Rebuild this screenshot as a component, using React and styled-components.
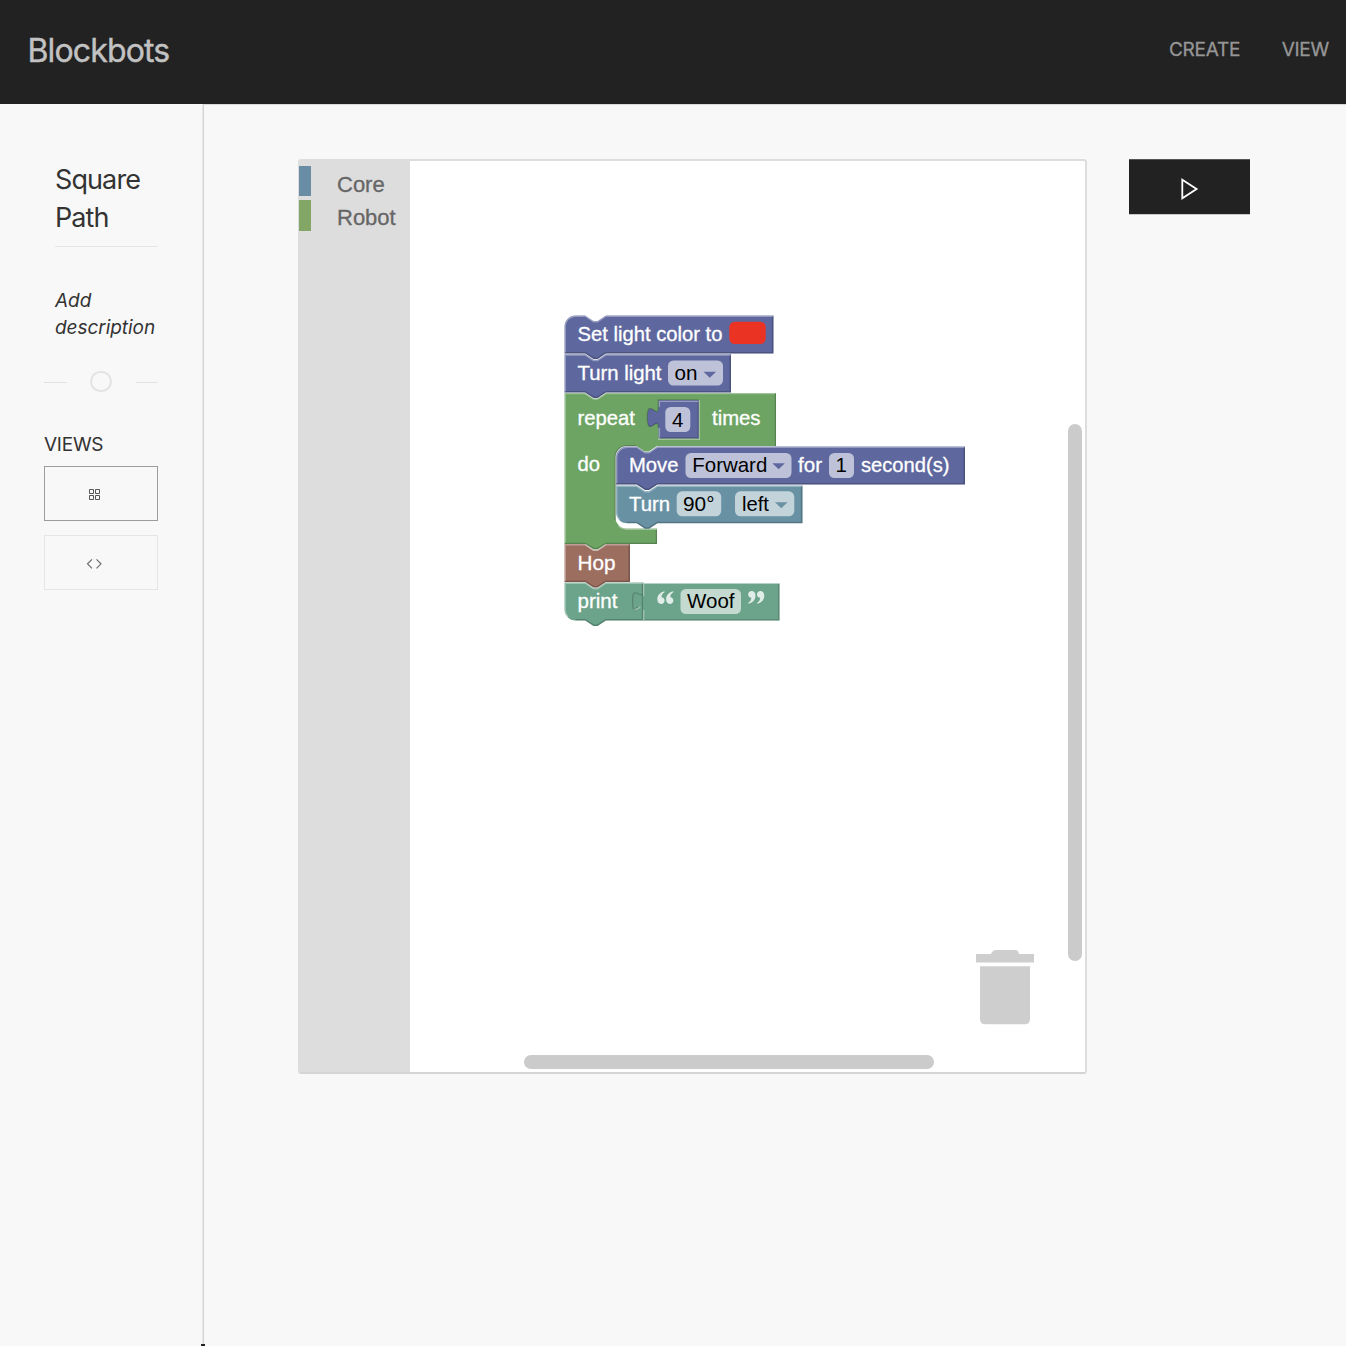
import React from "react";
import styled, { createGlobalStyle } from "styled-components";

const GlobalStyle = createGlobalStyle`
  *, *::before, *::after { box-sizing: border-box; }
  html, body { margin: 0; padding: 0; background: #f8f8f8; }
  body { font-family: Inter, "Liberation Sans", sans-serif; color: #333; overflow: hidden; }
`;

const Page = styled.div`
  display: flex;
  flex-direction: column;
  height: 1346px;
`;

const Header = styled.header`
  display: flex;
  flex: 0 0 104px;
  align-items: center;
  justify-content: space-between;
  padding: 0 17px 2px 27.5px;
  background: #222;
`;

const Brand = styled.a`
  font-size: 32px;
  line-height: 40px;
  letter-spacing: -0.85px;
  color: #c2c2c2;
  -webkit-text-stroke: 0.4px #c2c2c2;
`;

const Nav = styled.nav`
  display: flex;
  gap: 41.5px;
  padding-bottom: 2px;
`;

const NavLink = styled.a`
  font-size: 19px;
  line-height: 24px;
  letter-spacing: -0.25px;
  color: #969696;
  -webkit-text-stroke: 0.3px #969696;
`;

const Body = styled.div`
  display: flex;
  flex: 1;
  min-height: 0;
`;

const Sidebar = styled.aside`
  position: relative;
  flex: 0 0 204px;
  padding: 57px 45px 0 44px;
`;

const SidebarRule = styled.span`
  position: absolute;
  top: 0;
  bottom: 0;
  right: 0;
  width: 2px;
  background: linear-gradient(to right, #e9e9e9 50%, #d3d3d3 50%);
`;

const SidebarEnd = styled.span`
  position: absolute;
  right: -1px;
  bottom: 0;
  width: 4px;
  height: 2px;
  background: #222;
`;

const Title = styled.h1`
  margin: 0 0 0 11px;
  padding-bottom: 9px;
  width: 103px;
  border-bottom: 1px solid #e5e5e5;
  font-size: 27px;
  font-weight: 400;
  line-height: 38px;
  letter-spacing: -0.9px;
`;

const Description = styled.p`
  margin: 40px 0 0 11px;
  font-size: 19px;
  font-style: italic;
  line-height: 27px;
  letter-spacing: -0.05px;
`;

const Divider = styled.div`
  display: flex;
  align-items: center;
  justify-content: space-between;
  width: 114px;
  height: 22px;
  margin-top: 30px;
`;

const Dash = styled.span`
  width: 22.5px;
  height: 1px;
  background: #e2e2e2;
`;

const Ring = styled.span`
  width: 21.5px;
  height: 21.5px;
  margin-top: -1px;
  border: 2px solid #e3e3e3;
  border-radius: 50%;
`;

const SectionLabel = styled.h2`
  margin: 38px 0 8px;
  font-size: 19px;
  font-weight: 400;
  line-height: 27px;
  letter-spacing: -0.25px;
`;

const ViewButton = styled.button`
  display: flex;
  align-items: center;
  justify-content: center;
  width: 114px;
  height: 55px;
  margin: 0 0 14px;
  padding: 2px 14px 0 0;
  background: transparent;
  border: 1px solid ${(p) => (p.$active ? "#9c9c9c" : "#e5e5e5")};
`;

const Main = styled.main`
  display: flex;
  flex: 1;
  align-items: flex-start;
  gap: 42px;
  padding: 54px 0 0 94px;
  border-top: 1px solid #dadada;
`;

const Workspace = styled.section`
  position: relative;
  display: flex;
  width: 789px;
  height: 915px;
  border: 2px solid #ddd;
  border-bottom-color: #d4d4d4;
  border-radius: 3px;
  background: #fff;
`;

const Toolbox = styled.div`
  display: flex;
  flex: 0 0 110px;
  flex-direction: column;
  gap: 4px;
  padding-top: 5px;
  background: #ddd;
`;

const Category = styled.div`
  height: 30.4px;
  margin-left: -1px;
  padding: 2.6px 0 0 26px;
  border-left: 12px solid ${(p) => p.$color};
  font: 22px/32px "Liberation Sans", Arial, sans-serif;
  color: #666;
  -webkit-text-stroke: 0.3px #666;
  white-space: nowrap;

  & + & {
    padding-top: 1.6px;
  }
`;

const Canvas = styled.svg`
  display: block;
  width: 675px;
  height: 911px;
`;

const Label = styled.text`
  font: 20.2px "Liberation Sans", Arial, sans-serif;
  fill: ${(p) => (p.$dark ? "#000" : "#fff")};
  stroke: ${(p) => (p.$dark ? "none" : "#fff")};
  stroke-width: 0.3;
`;

const FieldBox = styled.rect`
  fill: #fff;
  fill-opacity: 0.6;
`;

const Highlight = styled.path`
  fill: none;
  stroke: #fff;
  stroke-opacity: 0.34;
  stroke-width: 1.4;
`;

const Shade = styled.path`
  fill: none;
  stroke: #000;
  stroke-opacity: 0.2;
  stroke-width: ${(p) => p.$width || 1.3};
`;

const Scrollbar = styled.div`
  position: absolute;
  left: ${(p) => p.$x}px;
  top: ${(p) => p.$y}px;
  width: ${(p) => p.$w}px;
  height: ${(p) => p.$h}px;
  border-radius: 7px;
  background: #cbcbcb;
`;

const TrashCan = styled.svg`
  position: absolute;
  left: 676px;
  top: 788px;
  width: 62px;
  height: 78px;
  fill: #cecece;
`;

const RunButton = styled.button`
  display: flex;
  align-items: center;
  justify-content: center;
  width: 121px;
  height: 55px;
  padding: 4px 0 0 1px;
  border: 0;
  background: #222;
  box-shadow: inset 0 1px #555, 0 0.5px #999;
`;

const NAVY = "#5e689f";
const GREEN = "#6da464";
const BLUE = "#6891a4";
const BROWN = "#9c6e5f";
const TEAL = "#6ba38b";

const NOTCH = "l 8.3,5.5 h 4.1 l 8.3,-5.5";
const NOTCH_BACK = "l -8.3,5.5 h -4.1 l -8.3,-5.5";
const TAB = "c 0,13.8 -11,-11 -11,10.35 s 11,-3.45 11,10.35";
const TAB_BACK = "c 0,-13.8 -11,11 -11,-10.35 s 11,3.45 11,-10.35";

function Statement({ x, y, right, bottom, color, roundTop, roundBottom }) {
  const r = 11;
  const top = roundTop
    ? `M ${x},${y + r} a ${r},${r} 0 0 1 ${r},${-r} H ${x + 20.7}`
    : `M ${x},${y} H ${x + 20.7}`;
  const foot = roundBottom
    ? `H ${x + r} a ${r},${r} 0 0 1 ${-r},${-r}`
    : `H ${x}`;
  const outline = `${top} ${NOTCH} H ${right} V ${bottom} H ${x + 41.4} ${NOTCH_BACK} ${foot} Z`;
  const leftEdge = roundBottom
    ? `M ${x + 3.5},${bottom - 3.5} A ${r - 0.7},${r - 0.7} 0 0 1 ${x + 0.7},${bottom - r} V ${y + 0.7}`
    : `M ${x + 0.7},${bottom - 1} V ${y + (roundTop ? r : 0.7)}`;
  const topEdge = roundTop
    ? `a ${r - 0.7},${r - 0.7} 0 0 1 ${r - 0.7},${-(r - 0.7)} H ${x + 20.7}`
    : `H ${x + 20.7}`;
  const clip = `edge-${Math.round(x)}-${Math.round(y)}`;
  return (
    <g>
      <clipPath id={clip}>
        <path d={outline} />
      </clipPath>
      <path d={outline} fill={color} />
      <Shade
        $width={2}
        d={`M ${right - 0.6},${y} V ${bottom - 0.6} H ${x + 41.4} ${NOTCH_BACK} H ${x + (roundBottom ? r : 0)}`}
        clipPath={`url(#${clip})`}
      />
      <Highlight d={`${leftEdge} ${topEdge} ${NOTCH} H ${right - 0.5}`} />
    </g>
  );
}

function Txt({ x, y, w, dark, children }) {
  return (
    <Label x={x} y={y} $dark={dark} textLength={w} lengthAdjust="spacingAndGlyphs">
      {children}
    </Label>
  );
}

function Field({ x, y, w }) {
  return <FieldBox x={x} y={y} width={w} height="25" rx="5.5" />;
}

function Arrow({ x, y, color }) {
  return <path d={`M ${x},${y} h 12.6 l -6.3,6 Z`} fill={color} />;
}

function QuoteMark({ transform }) {
  const mark =
    "M 7.2,0 C 2.8,1 0,4 0,8 C 0,11 1.6,12.6 3.8,12.6 C 5.9,12.6 7.3,11.1 7.3,9.2 C 7.3,7.3 6,6 4.2,5.9 C 4.1,3.6 5.3,1.9 7.2,0.9 Z";
  return (
    <g transform={transform} fill="#fff" fillOpacity="0.8">
      <path d={mark} />
      <path d={mark} transform="translate(8.8 0)" />
    </g>
  );
}

const LOOP = `M 564.5,393 H 585.2 ${NOTCH} H 776 V 446 H 657 ${NOTCH_BACK} H 626.5 a 11,11 0 0 0 -11,11 V 517.5 a 11,11 0 0 0 11,11 H 657 V 544 H 606 ${NOTCH_BACK} H 564.5 Z`;

function Blocks() {
  return (
    <Canvas viewBox="410 161 675 911">
      <Statement x={564.5} y={582.5} right={643.5} bottom={620.5} color={TEAL} roundBottom />
      <path d="M 643,583.2 H 779.5 V 620.5 H 643 Z" fill={TEAL} />
      <Shade d="M 778.9,584 V 619.9 H 644" />
      <Shade $width={1.2} d="M 642.5,594.5 C 639,597 632.6,586 632.6,600 S 635,608 638,607" />
      <Highlight d="M 643.7,620 V 610 M 634.500,609 q 2.500,1 6,-2.500 M 643.7,596 V 583.2 H 779" />

      <Statement x={564.5} y={544} right={630} bottom={582} color={BROWN} />

      <path d={LOOP} fill={GREEN} />
      <Shade d="M 775.4,394 V 446 M 615.2,520 V 457 a 11.3,11.3 0 0 1 11.3,-11.3 H 636 M 656.4,530 V 543.4 H 606 l -8.3,5 h -4.1 l -8.3,-5 H 565" />
      <Highlight d={`M 565.2,543 V 393.6 H 585.2 ${NOTCH} H 775 M 618.5,525.5 q 3,3.5 8,3.7 H 656.5`} />

      {/* The lit edge of the hop block shows along the loop's lower notch. */}
      <Highlight d={`M 585.2,544.5 ${NOTCH}`} />

      <Statement x={564.5} y={354.3} right={731} bottom={392.5} color={NAVY} />
      <Statement x={564.5} y={315.5} right={773.5} bottom={353.5} color={NAVY} roundTop />

      <path d={`M 658.5,400 H 698.8 V 438.6 H 658.5 V 428 ${TAB_BACK} Z`} fill={NAVY} />
      <Shade d={`M 699,400 H 658.3 V 407 ${TAB}`} />
      <Shade d="M 698.2,402 V 438 H 659" />
      <Highlight d="M 659.4,438.5 V 428 M 659.4,407 V 401.2 H 698 M 699.4,400 V 439.2 H 658" />

      <Statement x={616} y={485.5} right={802.5} bottom={523.3} color={BLUE} roundBottom />
      <Statement x={616} y={446.5} right={965} bottom={484.5} color={NAVY} roundTop />

      <Txt x={577.5} y={341} w={145}>Set light color to</Txt>
      <rect x="729.3" y="321.7" width="36.4" height="22.3" rx="5.5" fill="#eb3323" />

      <Txt x={577.5} y={380} w={84}>Turn light</Txt>
      <Field x={668} y={360.5} w={55} />
      <Txt x={674.5} y={380} w={23} dark>on</Txt>
      <Arrow x={703.5} y={371.7} color={NAVY} />

      <Txt x={577.5} y={425} w={57.5}>repeat</Txt>
      <Field x={665.3} y={407} w={25} />
      <Txt x={672} y={426.6} w={11.4} dark>4</Txt>
      <Txt x={712} y={425} w={48.5}>times</Txt>

      <Txt x={577.5} y={471} w={22.5}>do</Txt>
      <Txt x={629} y={472} w={49.5}>Move</Txt>
      <Field x={685.5} y={453} w={106} />
      <Txt x={692.3} y={472} w={75} dark>Forward</Txt>
      <Arrow x={772.3} y={463.3} color={NAVY} />
      <Txt x={798} y={472} w={24}>for</Txt>
      <Field x={829} y={453} w={25} />
      <Txt x={835.5} y={472} w={11.4} dark>1</Txt>
      <Txt x={861} y={472} w={88.5}>second(s)</Txt>

      <Txt x={629} y={511} w={41}>Turn</Txt>
      <Field x={676.7} y={491.3} w={44.5} />
      <Txt x={683} y={511} w={31.5} dark>90°</Txt>
      <Field x={735} y={491.3} w={59.3} />
      <Txt x={742} y={511} w={27} dark>left</Txt>
      <Arrow x={775} y={502.3} color={BLUE} />

      <Txt x={577.5} y={570} w={38}>Hop</Txt>
      <Txt x={577.5} y={608} w={40}>print</Txt>
      <QuoteMark transform="translate(657.3 591.3)" />
      <QuoteMark transform="translate(764.3 603.7) rotate(180)" />
      <Field x={680.5} y={589} w={60.5} />
      <Txt x={687} y={608} w={47.5} dark>Woof</Txt>
    </Canvas>
  );
}

export default function App() {
  return (
    <>
      <GlobalStyle />
      <Page>
        <Header>
          <Brand>Blockbots</Brand>
          <Nav>
            <NavLink>CREATE</NavLink>
            <NavLink>VIEW</NavLink>
          </Nav>
        </Header>
        <Body>
          <Sidebar>
            <Title>Square Path</Title>
            <Description>Add description</Description>
            <Divider>
              <Dash />
              <Ring />
              <Dash />
            </Divider>
            <SectionLabel>VIEWS</SectionLabel>
            <ViewButton $active aria-label="Blocks">
              <svg width="13" height="12" viewBox="0 0 13 12" fill="none" stroke="#555">
                <path d="M1.5 0.5H5.5V4.5H1.5Z M7.5 0.5H11.5V4.5H7.5Z M1.5 6.5H5.5V10.5H1.5Z M7.5 6.5H11.5V10.5H7.5Z" />
              </svg>
            </ViewButton>
            <ViewButton aria-label="Code">
              <svg width="16" height="12" viewBox="0 0 16 12" fill="none" stroke="#666" strokeWidth="1.1">
                <path d="M6 1.3 1.5 5.8 6 10.3 M10.5 1.3 15 5.8 10.5 10.3" />
              </svg>
            </ViewButton>
            <SidebarRule />
            <SidebarEnd />
          </Sidebar>
          <Main>
            <Workspace>
              <Toolbox>
                <Category $color="#688da5">Core</Category>
                <Category $color="#81a665">Robot</Category>
              </Toolbox>
              <Blocks />
              <TrashCan viewBox="976 949 62 78">
                <path d="M976 954H991Q992.5 950 996 950H1015Q1018.5 950 1019 954H1034V962.5H976Z M980 966.3H1030V1019Q1030 1024.3 1024.5 1024.3H985.5Q980 1024.3 980 1019Z" />
              </TrashCan>
              <Scrollbar $x={768} $y={263} $w={14} $h={537} />
              <Scrollbar $x={224} $y={893.5} $w={410} $h={14} />
            </Workspace>
            <RunButton aria-label="Run">
              <svg width="18" height="22" viewBox="0 0 18 22" fill="none" stroke="#fff" strokeWidth="1.8">
                <path d="M1.3 1.7 15.6 11 1.3 20.3Z" />
              </svg>
            </RunButton>
          </Main>
        </Body>
      </Page>
    </>
  );
}
